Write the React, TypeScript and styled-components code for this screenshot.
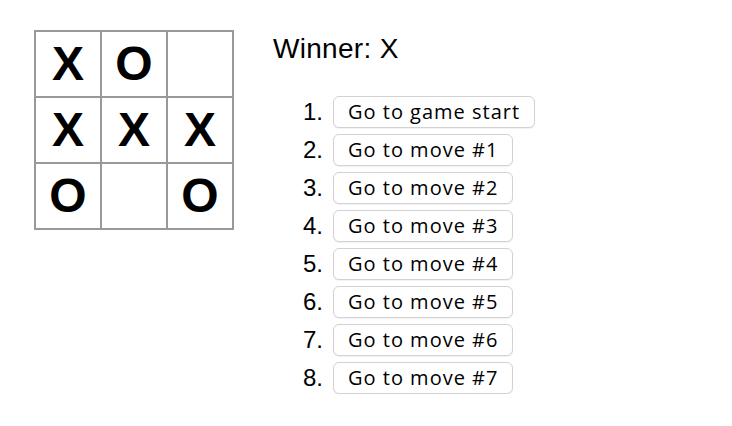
import React from "react";
import styled, { createGlobalStyle } from "styled-components";

const Global = createGlobalStyle`
  html, body { margin: 0; padding: 0; background: #fff; }
  body { font-family: "Liberation Sans", Arial, sans-serif; color: #000; }
`;

const Game = styled.div`
  display: flex;
  flex-direction: row;
  padding: 30px 0 0 34px;
`;

const Board = styled.div`
  display: grid;
  grid-template-columns: repeat(3, 66px);
  grid-template-rows: repeat(3, 66px);
  width: 200px;
  height: 200px;
`;

const Square = styled.button`
  box-sizing: border-box;
  width: 68px;
  height: 68px;
  padding: 0;
  background: #fff;
  border: 2px solid #999;
  font-family: "Liberation Sans", Arial, sans-serif;
  font-size: 48px;
  font-weight: bold;
  line-height: 64px;
  text-align: center;
  color: #000;
`;

const Info = styled.div`
  margin-left: 39px;
  display: flex;
  flex-direction: column;
`;

const Status = styled.div`
  font-size: 28px;
  line-height: 32px;
  height: 32px;
  margin-top: 3px;
  letter-spacing: 0.3px;
`;

const Moves = styled.ol`
  list-style: none;
  margin: 31px 0 0 0;
  padding: 0;
  display: flex;
  flex-direction: column;
  gap: 6px;
`;

const Move = styled.li`
  display: flex;
  align-items: center;
  gap: 10px;
`;

const Num = styled.span`
  width: 50px;
  text-align: right;
  font-size: 24px;
  line-height: 32px;
`;

const JumpButton = styled.button`
  box-sizing: border-box;
  height: 32px;
  padding: 0 14px;
  background: #fff;
  border: 1px solid #d2d2d2;
  border-radius: 6px;
  box-shadow: 0 1px 1px rgba(0, 0, 0, 0.06);
  font-family: "Open Sans", "Liberation Sans", sans-serif;
  font-size: 20px;
  letter-spacing: 1px;
  line-height: 30px;
  color: #000;
`;

const squares = ["X", "O", "", "X", "X", "X", "O", "", "O"];
const moves = [
  "Go to game start",
  "Go to move #1",
  "Go to move #2",
  "Go to move #3",
  "Go to move #4",
  "Go to move #5",
  "Go to move #6",
  "Go to move #7",
];

export default function App() {
  return (
    <>
      <Global />
      <Game>
        <Board>
          {squares.map((s, i) => (
            <Square key={i}>{s}</Square>
          ))}
        </Board>
        <Info>
          <Status>Winner: X</Status>
          <Moves>
            {moves.map((m, i) => (
              <Move key={i}>
                <Num>{i + 1}.</Num>
                <JumpButton>{m}</JumpButton>
              </Move>
            ))}
          </Moves>
        </Info>
      </Game>
    </>
  );
}
